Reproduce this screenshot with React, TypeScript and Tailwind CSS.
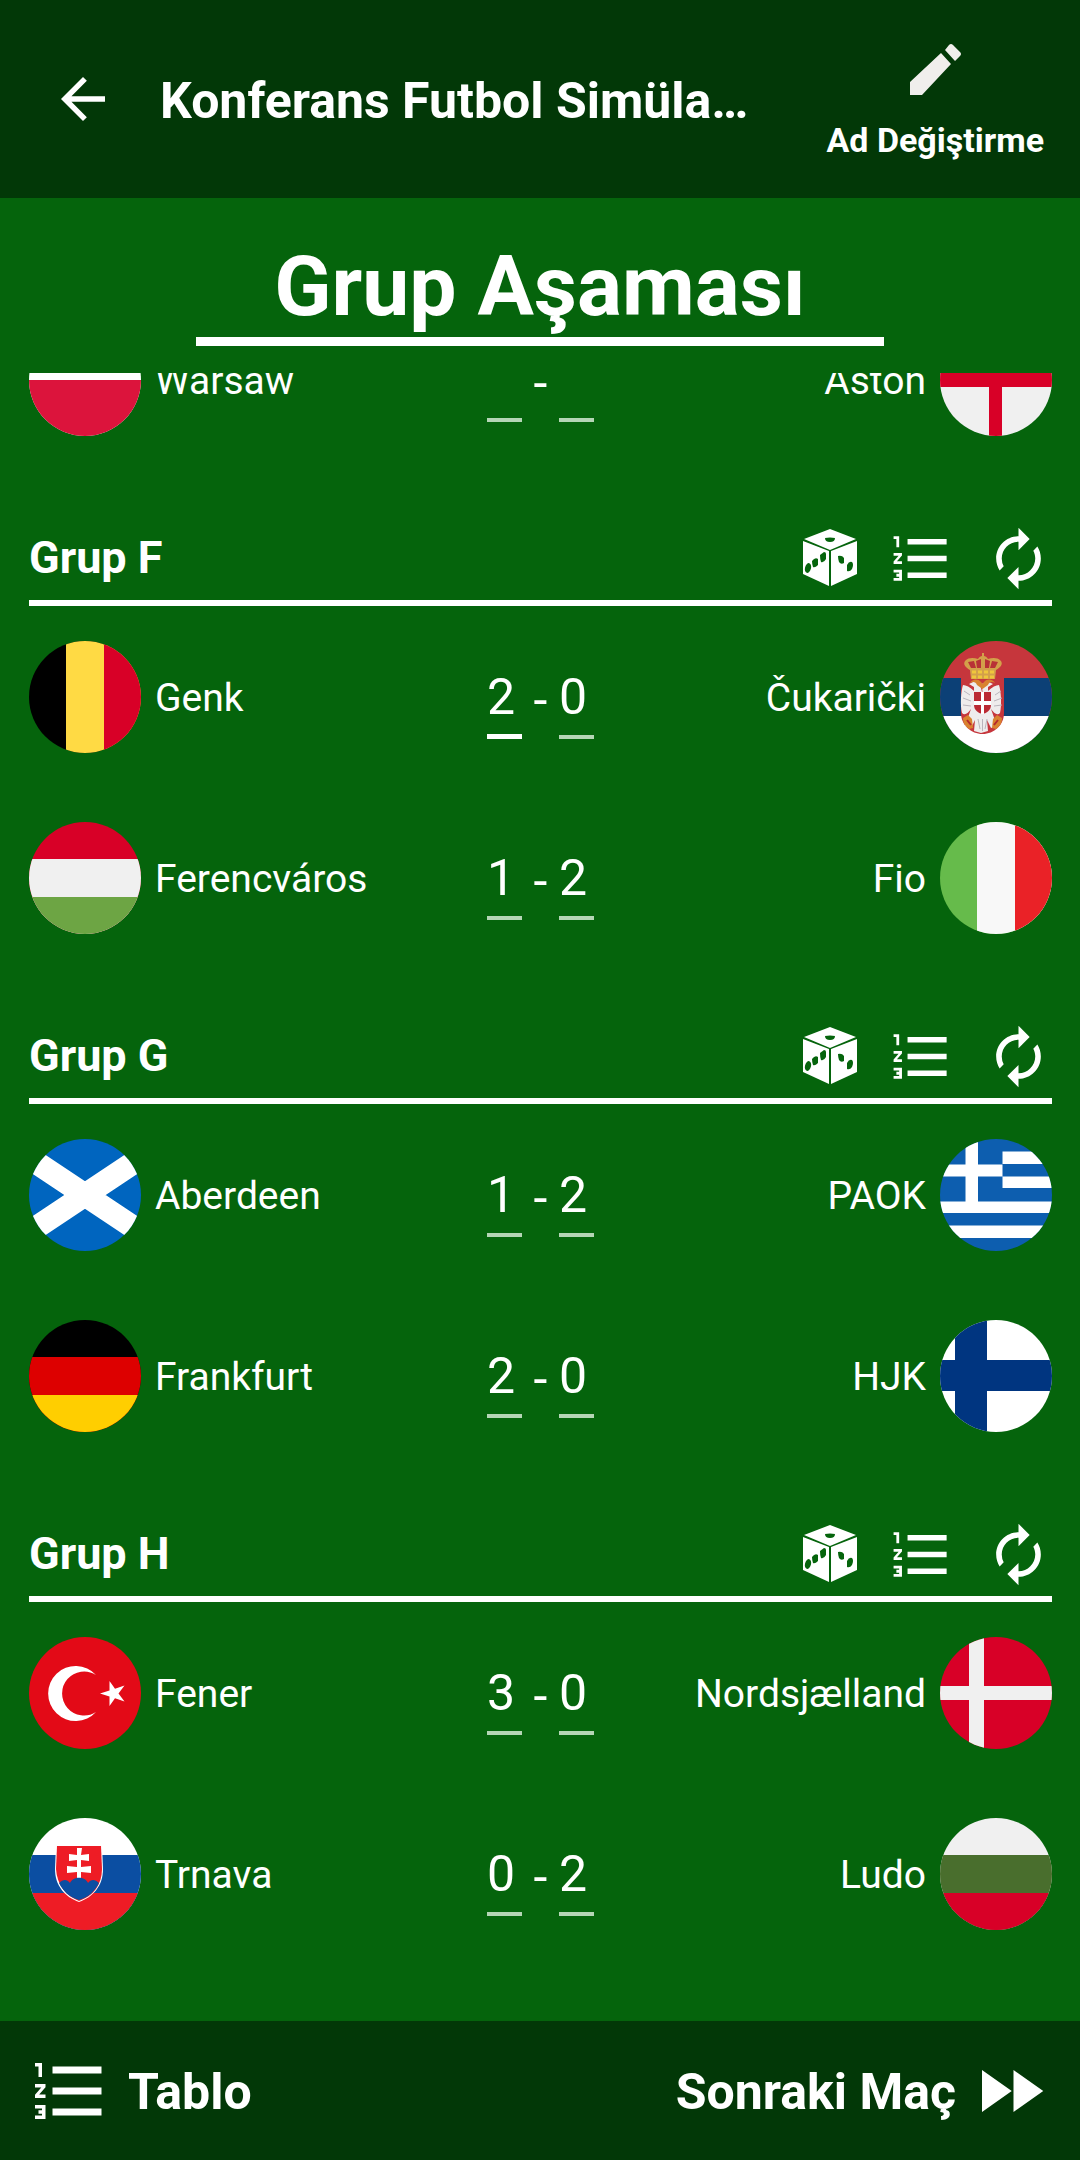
import { type ReactNode, useId, useState } from 'react'
import { MdAutorenew, MdFastForward, MdFormatListNumbered } from 'react-icons/md'

type Team = { name: string; flag: string }
type Match = { home: Team; away: Team; score: [string, string]; active?: boolean }
type Group = { name: string; matches: Match[] }

const lastOfE: Match = {
  home: { name: 'Warsaw', flag: 'pl' },
  away: { name: 'Aston', flag: 'en' },
  score: ['', ''],
}

const groups: Group[] = [
  {
    name: 'Grup F',
    matches: [
      { home: { name: 'Genk', flag: 'be' }, away: { name: 'Čukarički', flag: 'rs' }, score: ['2', '0'], active: true },
      { home: { name: 'Ferencváros', flag: 'hu' }, away: { name: 'Fio', flag: 'it' }, score: ['1', '2'] },
    ],
  },
  {
    name: 'Grup G',
    matches: [
      { home: { name: 'Aberdeen', flag: 'sct' }, away: { name: 'PAOK', flag: 'gr' }, score: ['1', '2'] },
      { home: { name: 'Frankfurt', flag: 'de' }, away: { name: 'HJK', flag: 'fi' }, score: ['2', '0'] },
    ],
  },
  {
    name: 'Grup H',
    matches: [
      { home: { name: 'Fener', flag: 'tr' }, away: { name: 'Nordsjælland', flag: 'dk' }, score: ['3', '0'] },
      { home: { name: 'Trnava', flag: 'sk' }, away: { name: 'Ludo', flag: 'bg' }, score: ['0', '2'] },
    ],
  },
]

// Flags are drawn on a 112x112 canvas
const bands = (a: string, b: string, c: string) => (
  <>
    <rect width="112" height="112" fill={a} />
    <rect y="37" width="112" height="75" fill={b} />
    <rect y="75" width="112" height="37" fill={c} />
  </>
)

const bars = (a: string, b: string, c: string) => (
  <>
    <rect width="112" height="112" fill={a} />
    <rect x="37" width="75" height="112" fill={b} />
    <rect x="75" width="37" height="112" fill={c} />
  </>
)

const flags: Record<string, ReactNode> = {
  pl: (
    <>
      <rect width="112" height="112" fill="#fff" />
      <rect y="56" width="112" height="56" fill="#dc143c" />
    </>
  ),
  en: (
    <>
      <rect width="112" height="112" fill="#f0f0f0" />
      <path d="M0 49h49V0h13v49h50v14H62v49H49V63H0z" fill="#d80027" />
    </>
  ),
  be: bars('#000', '#ffda44', '#d80027'),
  it: bars('#66bb4b', '#f8f8f8', '#ea2227'),
  hu: bands('#d80027', '#f0f0f0', '#6da544'),
  de: bands('#000', '#d00', '#ffce00'),
  bg: bands('#f0f0f0', '#496e2d', '#d80027'),
  rs: (
    <>
      {bands('#c6363c', '#0c4076', '#fff')}
      <path d="M21 37h43v35c0 12-10 21-21.500 21S21 84 21 72z" fill="#c6363c" />
      <path
        d="M42.500 53L40 43l-5-3-6 3 5 3v4c-4-4-8-6-11-6-2 6-3 20-1 28 3 3 6 0 9-4l-6 17 6 2 4-8-1 11 7 2 7-2-1-11 4 8 6-2-6-17c3 4 6 7 9 4 2-8 1-22-1-28-3 0-7 2-11 6v-4l5-3-6-3-5 3z"
        fill="#eeecec"
      />
      <path d="M24 50l6 4M23 57l8 3M23 64l8 1M61 50l-6 4M62 57l-8 3M62 64l-8 1M38 78l2 10M42.500 78v12M47 78l-2 10" stroke="#b9b4bb" strokeWidth="1" />
      <path d="M23 77l5-3 4 4 1 9-4 1c-4-3-6-6-6-11zM62 77l-5-3-4 4-1 9 4 1c4-3 6-6 6-11z" fill="#d9822f" />
      <path d="M27 79l4 5M58 79l-4 5" stroke="#b5282c" strokeWidth="2" />
      <path d="M30 42c2-4 8-5 11-1l1.500 2 1.500-2c3-4 9-3 11 1-3-2-6-1-7 2l-5.500 4-5.500-4c-1-3-4-4-7-2z" fill="#d9822f" />
      <path d="M34 51h17v13c0 5-4 8-8.500 9-4.500-1-8.500-4-8.500-9z" fill="#bb2a33" />
      <path d="M41 51h3v9h7v4h-7v9h-3v-9h-7v-4h7z" fill="#fff" />
      <path
        d="M31 38l-1-9c-5-3-7-6-5-9 4-4 9-3 13-2 1-2 3-3 4-3v-3h2v3c1 0 3 1 4 3 4-1 9-2 13 2 2 3 0 6-5 9l-1 9z"
        fill="#d3a04a"
      />
      <path d="M31 27l-3-6 6-1 2 7zM37 27l-1-7 5-2v9zM45 27v-9l5 2-1 7zM52 20l6 1-3 6h-5z" fill="#b83136" />
      <path d="M32 31h22M32 36h22" stroke="#efc63c" strokeWidth="3" strokeDasharray="4 2" />
    </>
  ),
  sct: (
    <>
      <rect width="112" height="112" fill="#0065bf" />
      <path d="M-4 16L116 96M116 16L-4 96" stroke="#fff" strokeWidth="23" />
    </>
  ),
  gr: (
    <>
      <rect width="112" height="112" fill="#0d5eaf" />
      <path
        d="M0 25.500h62.500v12H0zM25.500 0h12.500v62.500H25.500zM62.500 12.500H112v12.500H62.500zM62.500 37.500H112v11.500H62.500zM0 62.500h112v11.500H0zM0 86.500h112v12.500H0z"
        fill="#fff"
      />
    </>
  ),
  fi: (
    <>
      <rect width="112" height="112" fill="#fff" />
      <path d="M0 40h15V0h32v40h65v31H47v41H15V71H0z" fill="#003580" />
    </>
  ),
  tr: (
    <>
      <rect width="112" height="112" fill="#e30a17" />
      <path d="M67 38A27.500 27.500 0 1 0 67 75A22 22 0 1 1 67 38z" fill="#fff" />
      <path
        d="M71 56.500l9.500-3L80.500 44l5.500 7.700 9.500-3.200-6 8 6 8-9.500-3.200-5.500 7.700v-9.500z"
        fill="#fff"
      />
    </>
  ),
  dk: (
    <>
      <rect width="112" height="112" fill="#d80027" />
      <path d="M0 49h29V0h15v49h68v14H44v49H29V63H0z" fill="#f0f0f0" />
    </>
  ),
  sk: (
    <>
      {bands('#fff', '#0b4ea2', '#ee1c25')}
      <path d="M27 27h46l1 24c0 17-10 28-24 33C36 79 26 68 26 51z" fill="#fff" />
      <path d="M28 28h44l1 23c0 16-9 27-23 32C37 78 28 67 27 51z" fill="#ee1c25" />
      <path d="M48 30h5l-1 7 8-1v7l-8-1v7l10-1v7l-10-1v10h-4V54l-10 1v-7l10 1v-7l-8 1v-7l8 1z" fill="#fff" />
      <path d="M30 65c4-4 8-4 11 0 3-7 15-7 18 0 3-4 7-4 11 0-4 8-10 14-20 17-10-3-16-9-20-17z" fill="#0b4ea2" />
    </>
  ),
}

function Flag({ code }: { code: string }) {
  const id = useId()
  return (
    <svg viewBox="0 0 112 112" className="size-28 shrink-0" aria-hidden="true">
      <clipPath id={id}>
        <circle cx="56" cy="56" r="56" />
      </clipPath>
      <g clipPath={`url(#${id})`}>{flags[code]}</g>
    </svg>
  )
}

function DiceIcon() {
  return (
    <svg viewBox="0 0 56 58" className="h-[58px] w-14" aria-hidden="true">
      <path d="M28 0l26 10-26 11L2 10zM1 12l26 10v35L1 45zM55 12L29 22v35l26-12z" fill="#fff" />
      <g fill="#05640c">
        <path d="M23 9q5-1 10 0 0 4-5 4t-5-4z" />
        <path d="M18 26l4-3q2 0 2 2v5q-2 4-5 3-1-3-1-7z" />
        <path d="M10 32q3-4 6-2v6q-3 3-5 2-1-3-1-6z" />
        <ellipse cx="6" cy="39" rx="3" ry="5" transform="rotate(15 6 39)" />
        <path d="M36 27q4-1 6 2v5q-3 2-5-1-1-3-1-6z" />
        <path d="M45 36q2-4 5-3 2 2 0 7-2 3-5 2z" />
      </g>
    </svg>
  )
}

function ScoreInput({ label, initial, active }: { label: string; initial: string; active?: boolean }) {
  const [value, setValue] = useState(initial)
  return (
    <input
      value={value}
      onChange={e => setValue(e.target.value)}
      inputMode="numeric"
      aria-label={label}
      className={
        active
          ? 'h-[78px] w-[35px] border-b-[5px] border-white bg-transparent pb-0.5 text-[50px] outline-none'
          : 'h-[78px] w-[35px] border-b-4 border-[#b5d6b6] bg-transparent pb-0.5 text-[50px] outline-none'
      }
    />
  )
}

function MatchRow({ match }: { match: Match }) {
  const { home, away, score, active } = match
  return (
    <li className="grid h-28 grid-cols-[1fr_auto_1fr] items-center text-[39px]">
      <div className="flex items-center gap-3.5">
        <Flag code={home.flag} />
        <span className="pt-0.5">{home.name}</span>
      </div>
      <div className="flex items-center pt-1.5">
        <ScoreInput label={home.name} initial={score[0]} active={active} />
        <span className="w-[37px] text-center text-[50px]">-</span>
        <ScoreInput label={away.name} initial={score[1]} />
      </div>
      <div className="flex items-center justify-end gap-3.5">
        <span className="pt-0.5">{away.name}</span>
        <Flag code={away.flag} />
      </div>
    </li>
  )
}

export default function App() {
  return (
    <div className="flex h-screen flex-col bg-[#05640c] font-[Roboto,sans-serif] text-white">
      <header className="flex h-[198px] shrink-0 items-center bg-[#023807] pr-9 pl-[50px]">
        <button aria-label="Geri" className="shrink-0">
          <svg viewBox="0 0 24 24" className="size-[66px]" fill="currentColor" aria-hidden="true">
            <path d="M20 11H7.800l5.600-5.600L12 4l-8 8 8 8 1.400-1.400L7.800 13H20z" />
          </svg>
        </button>
        <h1 className="ml-11 flex-1 pt-1 text-[50px] font-bold whitespace-nowrap">Konferans Futbol Simüla…</h1>
        <button className="flex shrink-0 flex-col items-center gap-5 pt-3 text-[34px] font-bold">
          <svg viewBox="0 0 51 51" className="size-[51px]" fill="#f0eeec" aria-hidden="true">
            <path d="M0 38L31 9l10 11-29 31H0zM35 6l4-5q2-2 4 0l7 7q2 2 0 4l-5 5z" />
          </svg>
          Ad Değiştirme
        </button>
      </header>

      <div className="flex shrink-0 justify-center pt-[39px]">
        <h2 className="w-7/11 border-b-9 border-white text-center text-[84px] leading-[100px] font-bold">
          Grup Aşaması
        </h2>
      </div>

      {/* The list is scrolled, so the last row of the previous group is cut at the top */}
      <main className="mt-[27px] flex min-h-0 flex-1 flex-col justify-end gap-21 overflow-hidden pr-7 pb-[91px] pl-[29px]">
        <ul>
          <MatchRow match={lastOfE} />
        </ul>
        {groups.map(g => (
          <section key={g.name}>
            <div className="flex h-[86px] items-center border-b-[6px] border-white pb-1">
              <h3 className="flex-1 text-[45px] font-bold">{g.name}</h3>
              <button aria-label="Rastgele">
                <DiceIcon />
              </button>
              <button aria-label="Puan durumu" className="ml-[30px]">
                <MdFormatListNumbered className="size-[67px]" />
              </button>
              <button aria-label="Sıfırla" className="ml-[30px]">
                <MdAutorenew className="size-[67px]" />
              </button>
            </div>
            <ul className="mt-[35px] flex flex-col gap-[69px]">
              {g.matches.map(m => (
                <MatchRow key={m.home.name} match={m} />
              ))}
            </ul>
          </section>
        ))}
      </main>

      <footer className="flex h-[139px] shrink-0 items-center justify-between bg-[#023807] px-7 text-[50px] font-bold">
        <button className="flex items-center gap-4">
          <MdFormatListNumbered className="size-[84px]" />
          <span className="pt-1">Tablo</span>
        </button>
        <button className="flex items-center gap-3">
          <span className="pt-1">Sonraki Maç</span>
          <MdFastForward className="size-[84px]" />
        </button>
      </footer>
    </div>
  )
}
